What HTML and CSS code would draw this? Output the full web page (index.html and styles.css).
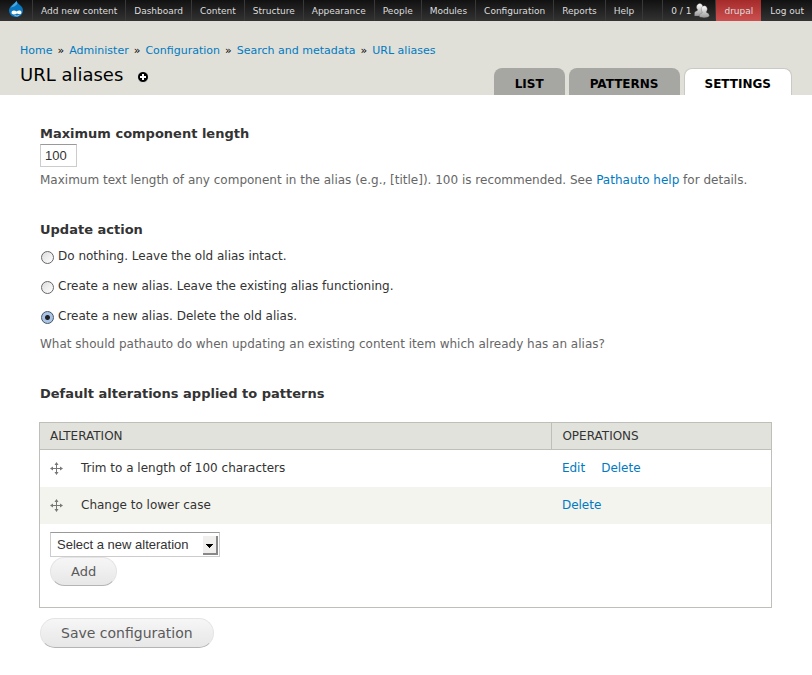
FILE: index.html
```html
<!doctype html>
<html lang="en">
<head>
<meta charset="UTF-8"/>
<title>URL aliases</title>
<link rel="stylesheet" href="styles.css">
</head>
<body>
<nav class="toolbar">
  <a class="home" href="#" aria-label="Home">
    <svg width="16" height="18" viewBox="0 0 16 18">
      <path d="M8.500 .5C7.800 2.700 6 3.500 4.500 4.700 2.300 6.300 1 8.200 1 10.500 1 14.300 4.200 17 8 17s7-2.700 7-6.500c0-2.500-1.400-4.300-3.400-5.800C10 3.500 8.800 2.400 8.500.5z" fill="#0a78c0"/>
      <path d="M8.300 1C7.500 3.300 4.300 4.700 2.700 8c1.800-1.300 6.500-2 6.700-5z" fill="#4aa8dc"/>
      <path d="M3.500 12.700c0-2.400 3-2.700 5-1.200 2-1.500 5-1.200 5 1 0 2.300-2.700 2.200-4.500 1-2 1.200-5.500 1.500-5.500-.8zM6 15c1.500.9 4 .9 5.500 0-.8 1.600-4.500 1.700-5.500 0z" fill="#fff"/>
    </svg>
  </a>
  <ul class="menu">
    <li><a href="#">Add new content</a></li>
    <li><a href="#">Dashboard</a></li>
    <li><a href="#">Content</a></li>
    <li><a href="#">Structure</a></li>
    <li><a href="#">Appearance</a></li>
    <li><a href="#">People</a></li>
    <li><a href="#">Modules</a></li>
    <li><a href="#">Configuration</a></li>
    <li><a href="#">Reports</a></li>
    <li><a href="#">Help</a></li>
  </ul>
  <ul class="account">
    <li><a class="users" href="#">0 / 1
      <svg width="16" height="16" viewBox="0 0 16 16">
        <defs>
          <linearGradient id="person" x1="0" y1="0" x2="0" y2="1">
            <stop offset="0" stop-color="#fff"/>
            <stop offset="1" stop-color="#999"/>
          </linearGradient>
        </defs>
        <g fill="url(#person)" stroke="#555" stroke-width=".3">
          <path d="M2.500 4a3.200 3.500 0 1 1 5.500 2.500c-.3.800 0 1.300 1 1.700V13H.5V10.500c0-1.600 1-2.200 2.500-2.700.7-.4.700-1 .3-1.500A3 3 0 0 1 2.500 4z"/>
          <path d="M7.300 6a3 3.300 0 1 1 5.200 2.400c-.3.800 0 1.300 1 1.600 1.200.5 1.800 1.500 1.800 3-1 2-8 2.300-10 .5.100-1.700.8-2.700 2.200-3.200 1-.4.900-1.200.5-1.700-.4-.7-.7-1.600-.7-2.600z"/>
        </g>
      </svg></a></li>
    <li class="name"><a href="#">drupal</a></li>
    <li class="logout"><a href="#">Log out</a></li>
  </ul>
</nav>

<header class="branding">
  <div class="breadcrumb">
    <a href="#">Home</a> » <a href="#">Administer</a> » <a href="#">Configuration</a> » <a href="#">Search and metadata</a> » <a href="#">URL aliases</a>
  </div>
  <div class="heading">
    <h1>URL aliases</h1>
    <a class="shortcut" href="#" aria-label="Add to shortcuts">
      <svg width="12" height="12" viewBox="0 0 12 12">
        <circle cx="6" cy="6" r="5.500" fill="#000" stroke="#fff" stroke-width=".8"/>
        <path d="M6 3v6M3 6h6" stroke="#fff" stroke-width="2"/>
      </svg>
    </a>
    <ul class="tabs">
      <li><a href="#">List</a></li>
      <li><a href="#">Patterns</a></li>
      <li><a class="active" href="#">Settings</a></li>
    </ul>
  </div>
</header>

<form class="content">
  <div class="item">
    <label class="title" for="max_length">Maximum component length</label>
    <input id="max_length" class="text" type="text" value="100"/>
    <div class="description">Maximum text length of any component in the alias (e.g., [title]). 100 is recommended. See <a href="#">Pathauto help</a> for details.</div>
  </div>

  <fieldset class="item">
    <legend class="title">Update action</legend>
    <div class="radio">
      <input id="action0" type="radio" name="action"/>
      <label for="action0">Do nothing. Leave the old alias intact.</label>
    </div>
    <div class="radio">
      <input id="action1" type="radio" name="action"/>
      <label for="action1">Create a new alias. Leave the existing alias functioning.</label>
    </div>
    <div class="radio">
      <input id="action2" type="radio" name="action" checked/>
      <label for="action2">Create a new alias. Delete the old alias.</label>
    </div>
    <div class="description">What should pathauto do when updating an existing content item which already has an alias?</div>
  </fieldset>

  <h2 class="title" id="alterations">Default alterations applied to patterns</h2>
  <table aria-labelledby="alterations">
    <thead>
      <tr><th>Alteration</th><th class="operations">Operations</th></tr>
    </thead>
    <tbody>
      <tr>
        <td>
          <svg class="handle" width="13" height="13" viewBox="0 0 13 13">
            <path d="M6.500 1v11M1 6.500h11" stroke="#777"/>
            <path d="M6.500 0l2 3h-4zM6.500 13l2-3h-4zM0 6.500l3-2v4zM13 6.500l-3-2v4z" fill="#777"/>
          </svg>Trim to a length of 100 characters
        </td>
        <td><a href="#">Edit</a><a href="#">Delete</a></td>
      </tr>
      <tr class="even">
        <td>
          <svg class="handle" width="13" height="13" viewBox="0 0 13 13">
            <path d="M6.500 1v11M1 6.500h11" stroke="#777"/>
            <path d="M6.500 0l2 3h-4zM6.500 13l2-3h-4zM0 6.500l3-2v4zM13 6.500l-3-2v4z" fill="#777"/>
          </svg>Change to lower case
        </td>
        <td><a href="#">Delete</a></td>
      </tr>
      <tr class="new">
        <td colspan="2">
          <select aria-label="Select a new alteration">
            <option>Select a new alteration</option>
          </select>
          <button class="add" type="button">Add</button>
        </td>
      </tr>
    </tbody>
  </table>
  <button class="save" type="button">Save configuration</button>
</form>
</body>
</html>
```

FILE: styles.css
```css
* {
  box-sizing: border-box;
}
body {
  margin: 0;
  background: #fff;
  color: #333;
  font: 12px/18px "DejaVu Sans", Verdana, sans-serif;
}
a {
  color: #007ac2;
  text-decoration: none;
}
ul {
  display: flex;
  margin: 0;
  padding: 0;
  list-style: none;
}

/* toolbar */
.toolbar {
  display: flex;
  height: 21px;
  background: linear-gradient(#111, #333);
  font-size: 9px;
  line-height: 22px;
  white-space: nowrap;
}
.toolbar a {
  display: block;
  height: 21px;
  padding: 0 8px;
  color: #ddd;
}
.toolbar li {
  border-right: 1px solid #383838;
}
.toolbar .home {
  width: 33px;
  border-right: 1px solid #383838;
}
.home svg {
  display: block;
}
.account {
  margin-left: auto;
  border-left: 1px solid #383838;
}
.toolbar .users {
  display: flex;
  align-items: center;
  gap: 3px;
  padding-right: 5px;
}
.account .name {
  border: 0;
  background: linear-gradient(#a52a2a, #cc5050);
}
.account .logout {
  border: 0;
}
.account .logout a {
  padding-left: 9px;
}

/* title area */
.branding {
  height: 74px;
  padding: 20px 20px 0;
  background: #e0e0d8;
  color: #000;
}
.breadcrumb {
  display: flex;
  gap: 5px;
  height: 18px;
  font-size: 11px;
  line-height: 19px;
}
.heading {
  display: flex;
  height: 36px;
}
h1 {
  margin: 4px 14px 0 0;
  font-size: 18px;
  font-weight: normal;
  line-height: 24px;
}
.shortcut {
  padding-top: 12px;
}
.shortcut svg {
  display: block;
}
.tabs {
  align-self: flex-end;
  gap: 4px;
  margin-left: auto;
}
.tabs a {
  display: block;
  height: 27px;
  padding: 0 21px;
  border-radius: 8px 8px 0 0;
  background: #a6a7a2;
  color: #000;
  font-weight: bold;
  line-height: 32px;
  text-transform: uppercase;
}
.tabs .active {
  padding: 0 20px;
  border: 1px solid #c9cac3;
  border-bottom: 0;
  background: #fff;
  line-height: 30px;
}

/* form */
.content {
  padding: 29px 40px 20px;
}
.item {
  margin: 0 0 31px;
  padding: 0;
  border: 0;
}
.title {
  display: block;
  margin: 0;
  padding: 0;
  font-size: 13px;
  font-weight: bold;
  line-height: 20px;
}
.text {
  display: block;
  width: 37px;
  height: 23px;
  padding: 0 4px;
  border: 1px solid #ccc;
  border-top-color: #999;
  color: #333;
  font: 13px "Liberation Sans", Arial, sans-serif;
}
.description {
  margin-top: 4px;
  color: #666;
}
.radio {
  display: flex;
  align-items: center;
  gap: 3px;
  height: 18px;
  margin: 7px 0 10px;
}
.radio + .radio {
  margin-top: 12px;
}
.radio input {
  appearance: none;
  width: 13px;
  height: 13px;
  margin: 2px 1px 0;
  border: 1px solid #666;
  border-radius: 50%;
  background: linear-gradient(135deg, #ddd, #fff);
}
.radio input:checked {
  border-color: #456;
  background: radial-gradient(circle, #222 2px, #a9c4e4 3px);
}

/* alterations */
h2.title {
  margin-bottom: 18px;
}
table {
  width: calc(100% + 1px);
  margin-left: -1px;
  border: 1px solid #bebfb9;
  border-collapse: collapse;
}
th {
  height: 27px;
  padding: 0 10px;
  border: 1px solid #bebfb9;
  background: #e1e2dc;
  font-weight: normal;
  text-align: left;
  text-transform: uppercase;
}
.operations {
  width: 30%;
}
td {
  height: 37px;
  padding: 0 10px;
}
td a {
  margin-right: 16px;
}
.even {
  background: #f3f4ee;
}
.handle {
  margin-right: 18px;
  vertical-align: -3px;
}
.new td {
  padding: 8px 10px 21px;
}
select {
  appearance: none;
  display: block;
  width: 170px;
  height: 25px;
  padding: 0 6px;
  border: 1px solid #ccc;
  border-top-color: #999;
  border-radius: 0;
  background:
    linear-gradient(#000, #000) 155px 11px / 7px 1px no-repeat,
    linear-gradient(#000, #000) 156px 12px / 5px 1px no-repeat,
    linear-gradient(#000, #000) 157px 13px / 3px 1px no-repeat,
    linear-gradient(#000, #000) 158px 14px / 1px 1px no-repeat,
    linear-gradient(#f0efed, #f0efed) 152px 3px / 13px 17px no-repeat,
    linear-gradient(#888, #888) 152px 3px / 15px 19px no-repeat,
    #fff;
  color: #333;
  font: 13px "Liberation Sans", Arial, sans-serif;
}
button {
  display: block;
  padding: 0 20px;
  border: 1px solid #e4e4e4;
  border-bottom-color: #b4b4b4;
  border-radius: 15px;
  background: linear-gradient(#f6f6f6, #e7e7e7);
  color: #5a5a5a;
  font-family: "DejaVu Sans", Verdana, sans-serif;
}
.add {
  height: 29px;
  font-size: 13px;
}
.save {
  height: 30px;
  margin-top: 10px;
  font-size: 14px;
}
```
